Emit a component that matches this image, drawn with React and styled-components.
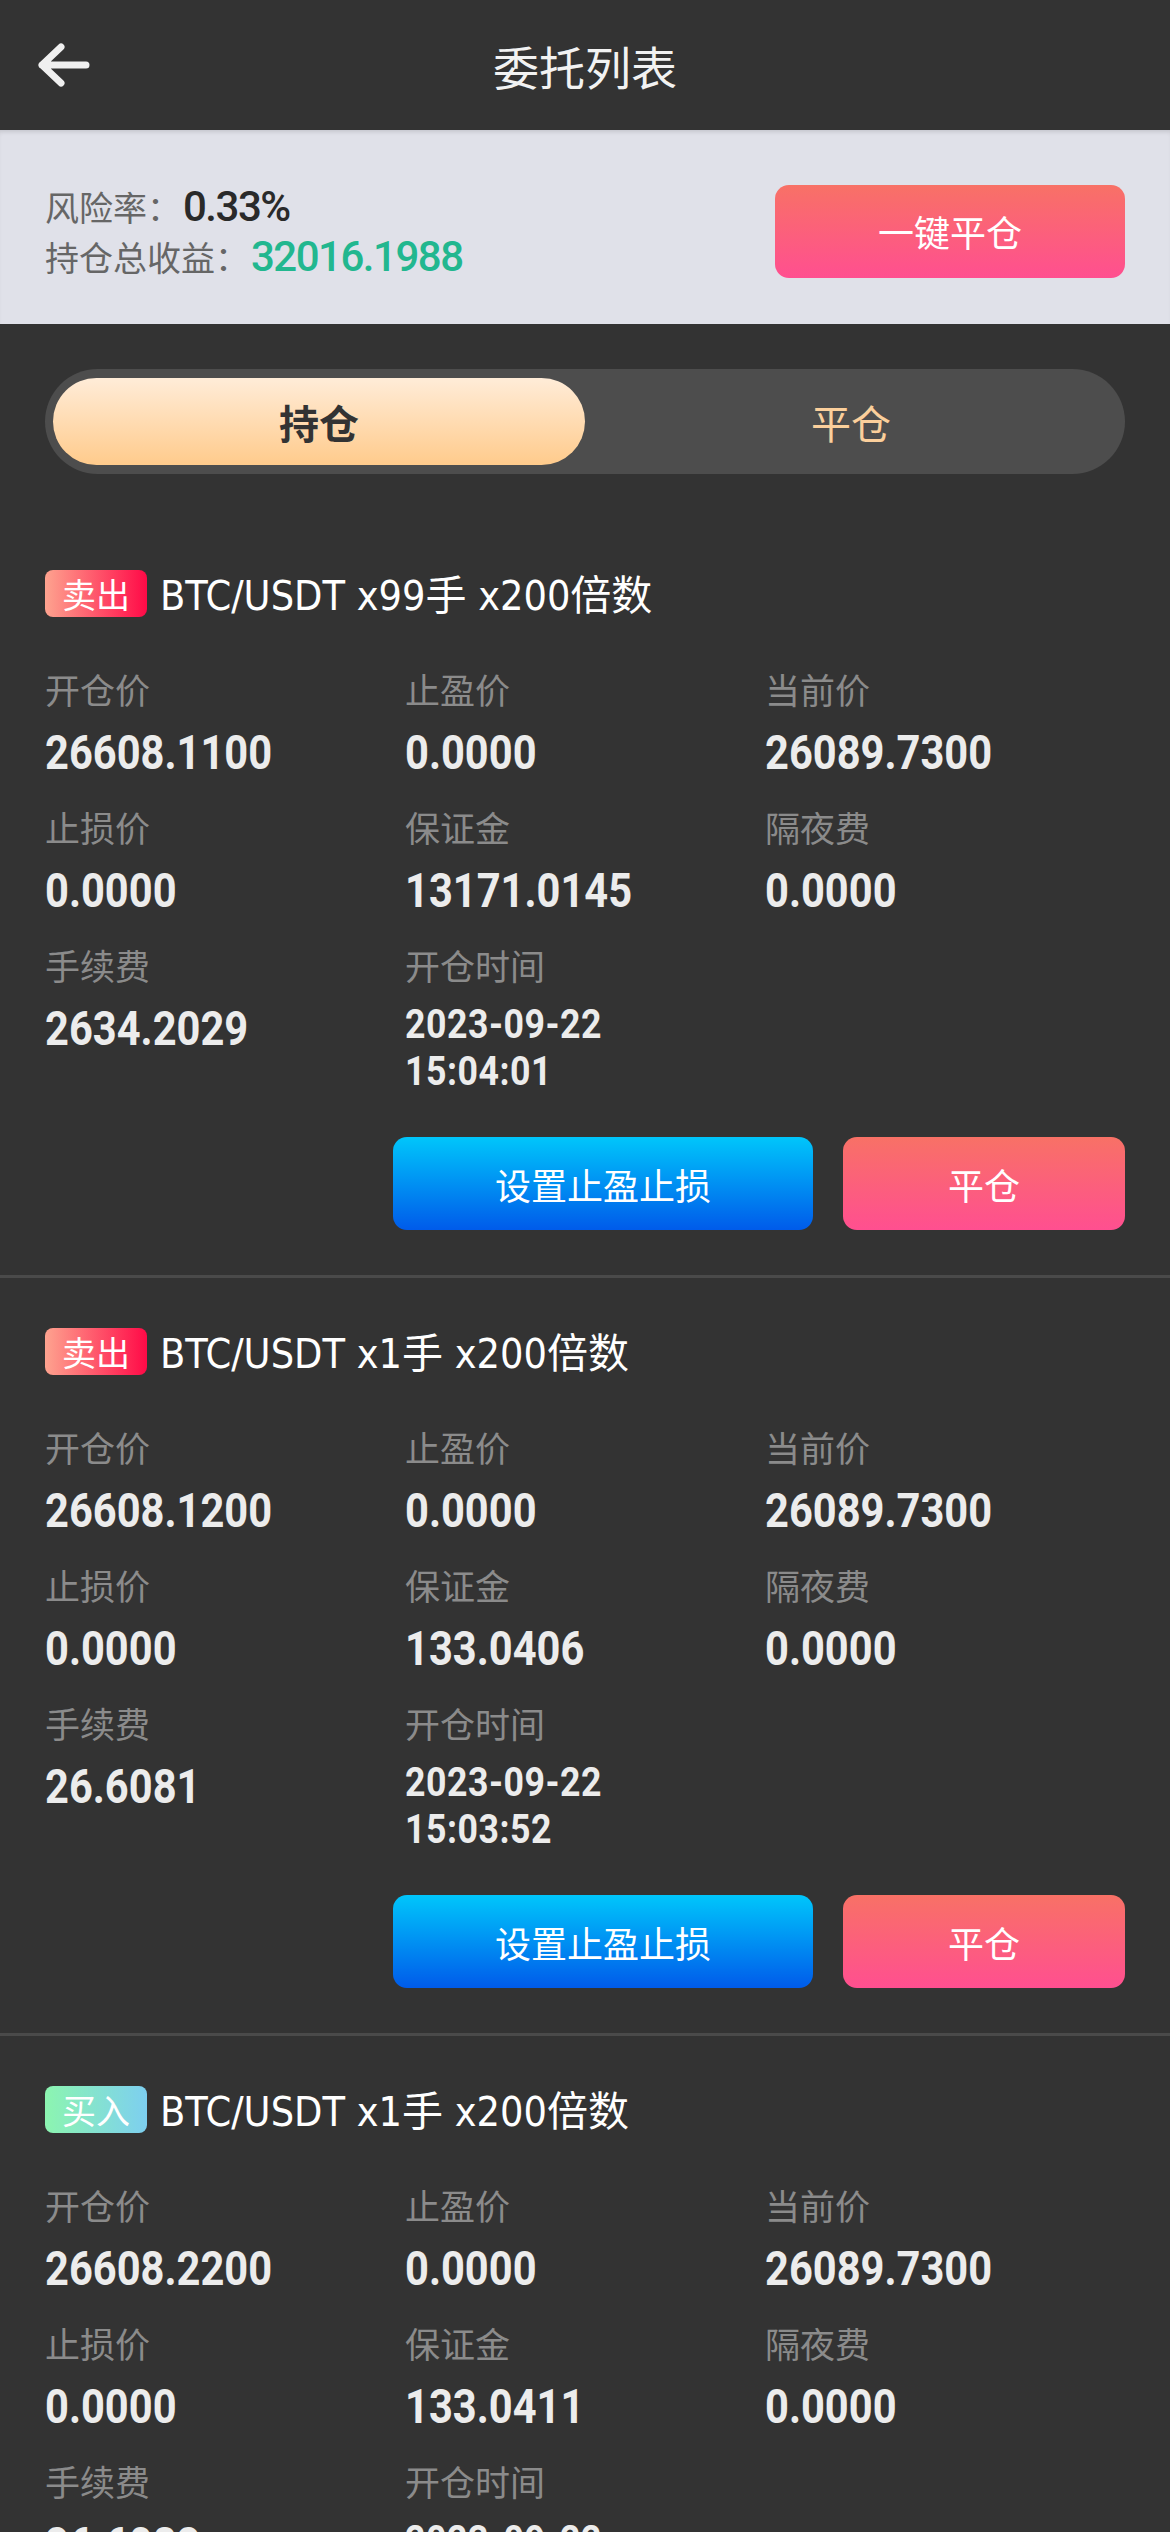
import React, { useState } from 'react'
import styled, { createGlobalStyle } from 'styled-components'

const GlobalStyle = createGlobalStyle`
    body {
        margin: 0;
        background: #333333;
        font-family: "Noto Sans CJK SC", "Noto Sans", sans-serif;
    }
`

// narrow, tall digits (DIN-like) - no condensed font installed, so squeeze Roboto
const NUM_FONT = `Roboto, "Noto Sans CJK SC", sans-serif`

const Page = styled.div`
    width: 1170px;
    height: 2532px;
    overflow: hidden;
    background: #333333;
`

const Header = styled.header`
    display: grid;
    grid-template-columns: 130px 1fr 130px;
    align-items: center;
    height: 130px;
    background: #333333;
`

const Back = styled.button`
    display: flex;
    align-items: center;
    padding: 0 0 0 36px;
    border: none;
    background: none;
    cursor: pointer;
`

const Title = styled.h1`
    margin: 0;
    text-align: center;
    font-size: 46px;
    font-weight: 400;
    color: #f2f2f2;
`

const RiskPanel = styled.section`
    display: flex;
    align-items: center;
    justify-content: space-between;
    box-sizing: border-box;
    height: 194px;
    padding: 8px 45px 0;
    background: #e0e1e9;
    box-shadow: inset 0 4px 4px -2px rgba(0, 0, 0, 0.12);
`

const RiskLine = styled.div`
    display: flex;
    align-items: center;
    height: 50px;
`

const RiskLabel = styled.span`
    font-size: 34px;
    color: #666666;
`

const RiskValue = styled.span`
    margin-left: 2px;
    font-family: Roboto, sans-serif;
    font-size: 42px;
    font-weight: 500;
    letter-spacing: -1.5px;
    color: ${p => p.$tone === 'up' ? '#22b78f' : '#2a2a2a'};
`

const GradientButton = styled.button`
    width: ${p => p.$width}px;
    height: 93px;
    border: none;
    border-radius: 14px;
    background: ${p => p.$variant === 'blue'
        ? 'linear-gradient(180deg, #00c6fb 0%, #005bea 100%)'
        : 'linear-gradient(180deg, #f87166 0%, #ff4f90 100%)'};
    color: #ffffff;
    font-family: "Noto Sans CJK SC", sans-serif;
    font-size: 36px;
    cursor: pointer;
`

const Tabs = styled.div`
    display: flex;
    margin: 45px 45px 46px;
    padding: 9px 8px;
    height: 105px;
    box-sizing: border-box;
    border-radius: 53px;
    background: #4d4d4d;
`

const Tab = styled.button`
    flex: 1;
    border: none;
    border-radius: 44px;
    background: ${p => p.$active ? 'linear-gradient(180deg, #ffecd8 0%, #ffcb8c 100%)' : 'transparent'};
    color: ${p => p.$active ? '#333333' : '#fbcf9b'};
    font-family: "Noto Sans CJK SC", sans-serif;
    font-size: 40px;
    font-weight: ${p => p.$active ? 700 : 400};
    cursor: pointer;
`

const Card = styled.article`
    padding: 50px 45px 45px;
    border-bottom: 3px solid #4a4a4a;
`

const CardHead = styled.div`
    display: flex;
    align-items: center;
    height: 47px;
`

const SideBadge = styled.span`
    height: 47px;
    padding: 0 17px;
    border-radius: 8px;
    background: ${p => p.$side === 'buy'
        ? 'linear-gradient(90deg, #8cf5b0 0%, #7dcff0 100%)'
        : 'linear-gradient(90deg, #fea38f 0%, #ff0a47 100%)'};
    color: #ffffff;
    font-size: 34px;
    line-height: 47px;
`

const PairTitle = styled.span`
    margin: 0 0 4px 13px;
    font-family: "DejaVu Sans Condensed", "Noto Sans CJK SC", sans-serif;
    font-size: 41px;
    color: #ffffff;
`

const Grid = styled.div`
    display: grid;
    grid-template-columns: repeat(3, 1fr);
    row-gap: 24px;
    margin-top: 50px;
`

const Cell = styled.div`
    display: flex;
    flex-direction: column;
    align-items: flex-start;
`

const Label = styled.span`
    font-size: 35px;
    line-height: 44px;
    color: #8b8b8b;
`

const Value = styled.span`
    display: inline-block;
    margin-top: 14px;
    font-family: ${NUM_FONT};
    font-size: 49px;
    font-weight: 700;
    line-height: 56px;
    color: #ececec;
    transform: scaleX(0.85);
    transform-origin: left center;
`

const DateValue = styled.span`
    display: inline-block;
    margin-top: 14px;
    font-family: ${NUM_FONT};
    font-size: 41px;
    font-weight: 700;
    line-height: 47px;
    letter-spacing: 0.6px;
    color: #ececec;
    transform: scaleX(0.87);
    transform-origin: left center;
`

const Actions = styled.div`
    display: flex;
    justify-content: flex-end;
    gap: 30px;
    margin-top: 42px;
`

const positions = [
    {
        side: 'sell', lots: 99, open: '26608.1100', tp: '0.0000', now: '26089.7300',
        sl: '0.0000', margin: '13171.0145', night: '0.0000', fee: '2634.2029',
        date: '2023-09-22', time: '15:04:01',
    },
    {
        side: 'sell', lots: 1, open: '26608.1200', tp: '0.0000', now: '26089.7300',
        sl: '0.0000', margin: '133.0406', night: '0.0000', fee: '26.6081',
        date: '2023-09-22', time: '15:03:52',
    },
    {
        side: 'buy', lots: 1, open: '26608.2200', tp: '0.0000', now: '26089.7300',
        sl: '0.0000', margin: '133.0411', night: '0.0000', fee: '26.6082',
        date: '2023-09-22', time: '15:03:40',
    },
]

function BackArrow() {
    return (
        <svg width="56" height="50" viewBox="0 0 56 50" fill="none">
            <path d="M25 7 L6 25 L25 43 M6 25 H50" stroke="#f0f0f0" strokeWidth="7" strokeLinecap="round" strokeLinejoin="round" />
        </svg>
    )
}

function Position({ item }) {
    return (
        <Card>
            <CardHead>
                <SideBadge $side={item.side}>{item.side === 'buy' ? '买入' : '卖出'}</SideBadge>
                <PairTitle>BTC/USDT x{item.lots}手 x200倍数</PairTitle>
            </CardHead>
            <Grid>
                <Cell><Label>开仓价</Label><Value>{item.open}</Value></Cell>
                <Cell><Label>止盈价</Label><Value>{item.tp}</Value></Cell>
                <Cell><Label>当前价</Label><Value>{item.now}</Value></Cell>
                <Cell><Label>止损价</Label><Value>{item.sl}</Value></Cell>
                <Cell><Label>保证金</Label><Value>{item.margin}</Value></Cell>
                <Cell><Label>隔夜费</Label><Value>{item.night}</Value></Cell>
                <Cell><Label>手续费</Label><Value>{item.fee}</Value></Cell>
                <Cell>
                    <Label>开仓时间</Label>
                    <DateValue>{item.date}<br />{item.time}</DateValue>
                </Cell>
            </Grid>
            <Actions>
                <GradientButton $variant="blue" $width={420}>设置止盈止损</GradientButton>
                <GradientButton $width={282}>平仓</GradientButton>
            </Actions>
        </Card>
    )
}

export default function App() {
    const [tab, setTab] = useState('hold')

    return (
        <Page>
            <GlobalStyle />
            <Header>
                <Back><BackArrow /></Back>
                <Title>委托列表</Title>
                <span />
            </Header>
            <RiskPanel>
                <div>
                    <RiskLine>
                        <RiskLabel>风险率：</RiskLabel>
                        <RiskValue>0.33%</RiskValue>
                    </RiskLine>
                    <RiskLine>
                        <RiskLabel>持仓总收益：</RiskLabel>
                        <RiskValue $tone="up">32016.1988</RiskValue>
                    </RiskLine>
                </div>
                <GradientButton $width={350}>一键平仓</GradientButton>
            </RiskPanel>
            <Tabs>
                <Tab $active={tab === 'hold'} onClick={() => setTab('hold')}>持仓</Tab>
                <Tab $active={tab === 'closed'} onClick={() => setTab('closed')}>平仓</Tab>
            </Tabs>
            {positions.map((p, i) => <Position key={i} item={p} />)}
        </Page>
    )
}
